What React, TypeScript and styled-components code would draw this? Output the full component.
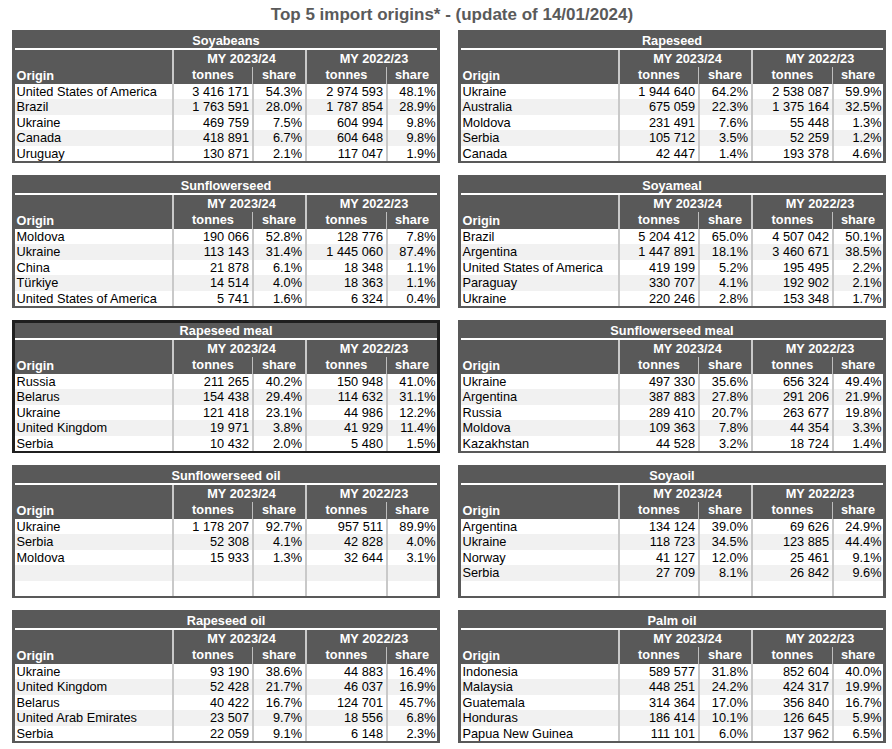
import React from "react";
import styled, { createGlobalStyle } from "styled-components";

const GlobalStyle = createGlobalStyle`
  html, body { margin: 0; padding: 0; background: #ffffff; }
  body { font-family: "Liberation Sans", Arial, sans-serif; }
`;

type Row = [string, string, string, string, string] | null;
interface TableData {
  title: string;
  rows: Row[];
  selected?: boolean;
}

const tables: TableData[] = [
  {
    title: "Soyabeans",
    rows: [
      ["United States of America", "3 416 171", "54.3%", "2 974 593", "48.1%"],
      ["Brazil", "1 763 591", "28.0%", "1 787 854", "28.9%"],
      ["Ukraine", "469 759", "7.5%", "604 994", "9.8%"],
      ["Canada", "418 891", "6.7%", "604 648", "9.8%"],
      ["Uruguay", "130 871", "2.1%", "117 047", "1.9%"],
    ],
  },
  {
    title: "Rapeseed",
    rows: [
      ["Ukraine", "1 944 640", "64.2%", "2 538 087", "59.9%"],
      ["Australia", "675 059", "22.3%", "1 375 164", "32.5%"],
      ["Moldova", "231 491", "7.6%", "55 448", "1.3%"],
      ["Serbia", "105 712", "3.5%", "52 259", "1.2%"],
      ["Canada", "42 447", "1.4%", "193 378", "4.6%"],
    ],
  },
  {
    title: "Sunflowerseed",
    rows: [
      ["Moldova", "190 066", "52.8%", "128 776", "7.8%"],
      ["Ukraine", "113 143", "31.4%", "1 445 060", "87.4%"],
      ["China", "21 878", "6.1%", "18 348", "1.1%"],
      ["Türkiye", "14 514", "4.0%", "18 363", "1.1%"],
      ["United States of America", "5 741", "1.6%", "6 324", "0.4%"],
    ],
  },
  {
    title: "Soyameal",
    rows: [
      ["Brazil", "5 204 412", "65.0%", "4 507 042", "50.1%"],
      ["Argentina", "1 447 891", "18.1%", "3 460 671", "38.5%"],
      ["United States of America", "419 199", "5.2%", "195 495", "2.2%"],
      ["Paraguay", "330 707", "4.1%", "192 902", "2.1%"],
      ["Ukraine", "220 246", "2.8%", "153 348", "1.7%"],
    ],
  },
  {
    title: "Rapeseed meal",
    selected: true,
    rows: [
      ["Russia", "211 265", "40.2%", "150 948", "41.0%"],
      ["Belarus", "154 438", "29.4%", "114 632", "31.1%"],
      ["Ukraine", "121 418", "23.1%", "44 986", "12.2%"],
      ["United Kingdom", "19 971", "3.8%", "41 929", "11.4%"],
      ["Serbia", "10 432", "2.0%", "5 480", "1.5%"],
    ],
  },
  {
    title: "Sunflowerseed meal",
    rows: [
      ["Ukraine", "497 330", "35.6%", "656 324", "49.4%"],
      ["Argentina", "387 883", "27.8%", "291 206", "21.9%"],
      ["Russia", "289 410", "20.7%", "263 677", "19.8%"],
      ["Moldova", "109 363", "7.8%", "44 354", "3.3%"],
      ["Kazakhstan", "44 528", "3.2%", "18 724", "1.4%"],
    ],
  },
  {
    title: "Sunflowerseed oil",
    rows: [
      ["Ukraine", "1 178 207", "92.7%", "957 511", "89.9%"],
      ["Serbia", "52 308", "4.1%", "42 828", "4.0%"],
      ["Moldova", "15 933", "1.3%", "32 644", "3.1%"],
      null,
      null,
    ],
  },
  {
    title: "Soyaoil",
    rows: [
      ["Argentina", "134 124", "39.0%", "69 626", "24.9%"],
      ["Ukraine", "118 723", "34.5%", "123 885", "44.4%"],
      ["Norway", "41 127", "12.0%", "25 461", "9.1%"],
      ["Serbia", "27 709", "8.1%", "26 842", "9.6%"],
      null,
    ],
  },
  {
    title: "Rapeseed oil",
    rows: [
      ["Ukraine", "93 190", "38.6%", "44 883", "16.4%"],
      ["United Kingdom", "52 428", "21.7%", "46 037", "16.9%"],
      ["Belarus", "40 422", "16.7%", "124 701", "45.7%"],
      ["United Arab Emirates", "23 507", "9.7%", "18 556", "6.8%"],
      ["Serbia", "22 059", "9.1%", "6 148", "2.3%"],
    ],
  },
  {
    title: "Palm oil",
    rows: [
      ["Indonesia", "589 577", "31.8%", "852 604", "40.0%"],
      ["Malaysia", "448 251", "24.2%", "424 317", "19.9%"],
      ["Guatemala", "314 364", "17.0%", "356 840", "16.7%"],
      ["Honduras", "186 414", "10.1%", "126 645", "5.9%"],
      ["Papua New Guinea", "111 101", "6.0%", "137 962", "6.5%"],
    ],
  },
];

const DARK = "#595959";
const SEP = "#c9c9c9";
const COLS = "157px 80px 53px 81px 51px";

const Page = styled.div`
  padding: 4px 0 0 12px;
  width: 874px;
`;

const Heading = styled.h1`
  margin: 0 0 5px 0;
  font-family: "Liberation Sans", Arial, sans-serif;
  font-size: 17px;
  line-height: 21px;
  font-weight: bold;
  color: #5a5a5a;
  text-align: center;
  width: 880px;
`;

const Board = styled.div`
  display: grid;
  grid-template-columns: 428px 428px;
  column-gap: 18px;
  row-gap: 12px;
`;

const Panel = styled.div<{ $selected?: boolean }>`
  border: 3px solid ${(p) => (p.$selected ? "#1f1f1f" : DARK)};
  border-bottom-width: 2.5px;
  background: ${DARK};
  font-size: 12.75px;
`;

const PanelTitle = styled.div`
  height: 15px;
  line-height: 15px;
  text-align: center;
  font-weight: bold;
  color: #ffffff;
`;

const WhiteRule = styled.div`
  height: 2px;
  background: #ffffff;
`;

const HeaderGrid = styled.div`
  display: grid;
  grid-template-columns: ${COLS};
  grid-template-rows: 16.5px 17px;
  color: #ffffff;
  font-weight: bold;
  background: ${DARK};
`;

const HeadOrigin = styled.div`
  grid-row: 1 / span 2;
  grid-column: 1;
  align-self: end;
  padding-left: 1.5px;
  line-height: 16px;
`;

const HeadGroup = styled.div<{ $col: number }>`
  grid-row: 1;
  grid-column: ${(p) => p.$col} / span 2;
  border-left: 2px solid ${SEP};
  text-align: center;
  line-height: 17px;
  padding-left: 4px;
`;

const HeadSub = styled.div<{ $major?: boolean }>`
  grid-row: 2;
  border-left: ${(p) => (p.$major ? `2px solid ${SEP}` : `1.5px solid #bdbdbd`)};
  text-align: center;
  line-height: 16px;
`;

const DataRow = styled.div<{ $alt: boolean }>`
  display: grid;
  grid-template-columns: ${COLS};
  height: 15.5px;
  line-height: 15.5px;
  background: ${(p) => (p.$alt ? "#f1f1f1" : "#ffffff")};
  color: #000000;
  white-space: nowrap;
`;

const OriginCell = styled.div`
  padding-left: 1.5px;
  overflow: hidden;
`;

const NumCell = styled.div<{ $last?: boolean }>`
  border-left: 2px solid ${SEP};
  text-align: right;
  padding-right: ${(p) => (p.$last ? "1.5px" : "3px")};
`;

function Table({ data }: { data: TableData }) {
  return (
    <Panel $selected={data.selected}>
      <PanelTitle>{data.title}</PanelTitle>
      <WhiteRule />
      <HeaderGrid>
        <HeadOrigin>Origin</HeadOrigin>
        <HeadGroup $col={2}>MY 2023/24</HeadGroup>
        <HeadGroup $col={4}>MY 2022/23</HeadGroup>
        <HeadSub $major>tonnes</HeadSub>
        <HeadSub>share</HeadSub>
        <HeadSub $major>tonnes</HeadSub>
        <HeadSub>share</HeadSub>
      </HeaderGrid>
      {data.rows.map((r, i) => (
        <DataRow key={i} $alt={i % 2 === 1}>
          <OriginCell>{r ? r[0] : ""}</OriginCell>
          <NumCell>{r ? r[1] : ""}</NumCell>
          <NumCell>{r ? r[2] : ""}</NumCell>
          <NumCell>{r ? r[3] : ""}</NumCell>
          <NumCell $last>{r ? r[4] : ""}</NumCell>
        </DataRow>
      ))}
    </Panel>
  );
}

export default function App() {
  return (
    <Page>
      <GlobalStyle />
      <Heading>Top 5 import origins* - (update of 14/01/2024)</Heading>
      <Board>
        {tables.map((t) => (
          <Table key={t.title} data={t} />
        ))}
      </Board>
    </Page>
  );
}
